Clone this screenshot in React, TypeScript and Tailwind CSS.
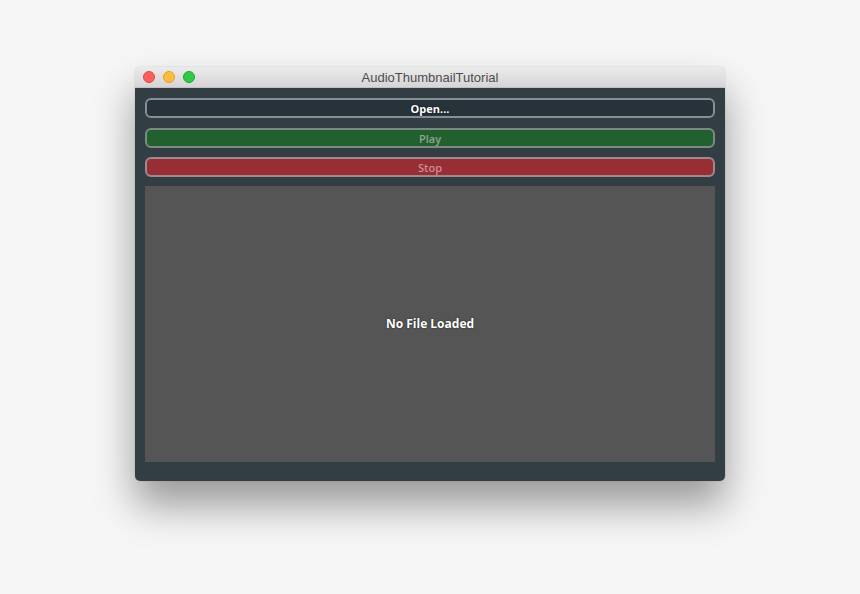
export default function App() {
  return (
    <div className="flex h-[594px] w-[860px] justify-center bg-[#f6f6f6] pt-[67px]">
      <div className="flex h-[414px] w-[590px] flex-col overflow-hidden rounded-[5px] shadow-[0_24px_40px_rgba(0,0,0,0.38),0_0_1px_rgba(0,0,0,0.4)]">
        <div className="relative flex h-[21px] shrink-0 items-center justify-center border-b border-[#c2c0c2] bg-gradient-to-b from-[#ecebec] to-[#d6d4d6]">
          <div className="absolute left-[8px] top-[4px] flex gap-[8px]">
            <span className="h-[12px] w-[12px] rounded-full border border-[#e2463f] bg-[#fc605b]" />
            <span className="h-[12px] w-[12px] rounded-full border border-[#e1a116] bg-[#fdbc40]" />
            <span className="h-[12px] w-[12px] rounded-full border border-[#12ac28] bg-[#34c84a]" />
          </div>
          <span className="font-['Liberation_Sans',sans-serif] text-[13px] leading-none text-[#4d4d4d]">
            AudioThumbnailTutorial
          </span>
        </div>
        <div className="flex flex-1 flex-col bg-[#323e44] px-[10px] pb-[19px] pt-[10px] font-['Open_Sans',sans-serif]">
          <button className="h-[20px] rounded-[6px] border-2 border-[#858f95] bg-[#27333a] text-[11px] font-bold leading-none text-white [text-shadow:0_0_2px_rgba(0,0,0,0.9)]">
            Open...
          </button>
          <button className="mt-[10px] h-[20px] rounded-[6px] border-2 border-[#7b8b81] bg-[#23602f] text-[11px] font-semibold leading-none text-[#8da792]">
            Play
          </button>
          <button className="mt-[9px] h-[20px] rounded-[6px] border-2 border-[#a3888b] bg-[#972e36] text-[11px] font-semibold leading-none text-[#cf8c91]">
            Stop
          </button>
          <div className="mt-[9px] flex flex-1 items-center justify-center bg-[#555555]">
            <span className="text-[12px] font-bold text-white [text-shadow:0_0_2px_rgba(0,0,0,0.6)]">
              No File Loaded
            </span>
          </div>
        </div>
      </div>
    </div>
  )
}
